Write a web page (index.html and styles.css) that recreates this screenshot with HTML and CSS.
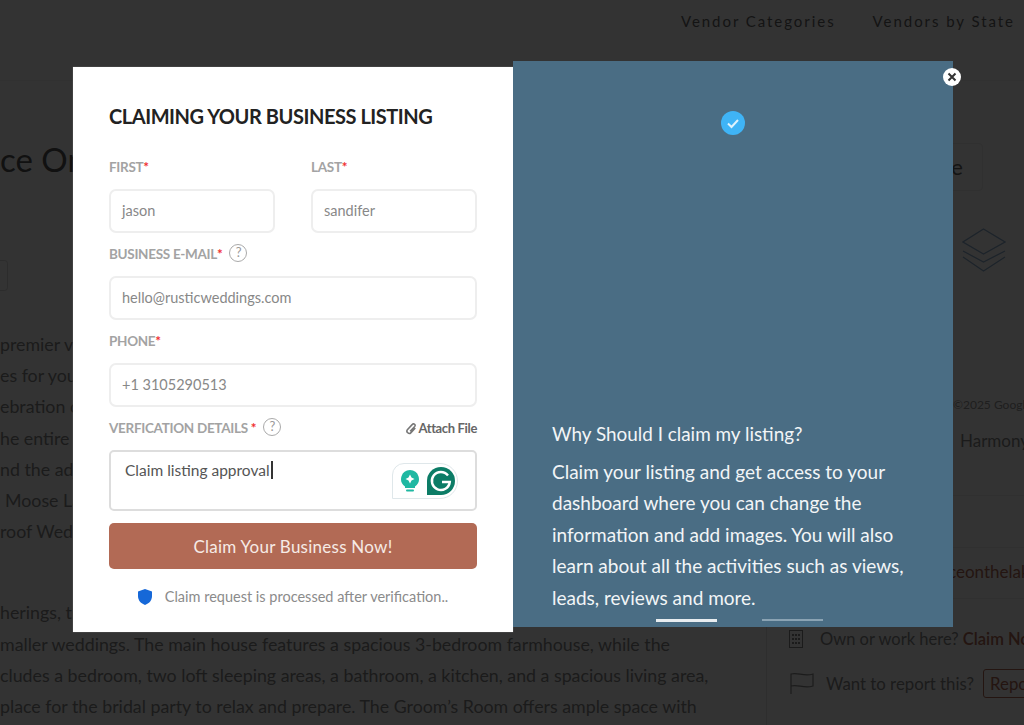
FILE: index.html
```html
<!DOCTYPE html>
<html lang="en">
<head>
    <meta charset="UTF-8">
    <meta name="viewport" content="width=device-width, initial-scale=1.0">
    <title>Claiming Your Business Listing</title>
    <link rel="stylesheet" href="styles.css">
</head>
<body>
    <!-- page behind the popup -->
    <div class="topbar">
        <a class="nav-link">Vendor Categories</a>
        <a class="nav-link">Vendors by State</a>
    </div>
    <div class="page">
        <div class="main">
            <h1 class="venue-title">ce On</h1>
            <div class="tag-box"></div>
            <div class="about">
                <p>premier venue</p>
                <p>es for your</p>
                <p>ebration of</p>
                <p>he entire</p>
                <p>nd the adjoining</p>
                <p class="indent">Moose Lake</p>
                <p>roof Wedding</p>
            </div>
            <div class="about about-two">
                <p>herings, the</p>
                <p>maller weddings. The main house features a spacious 3-bedroom farmhouse, while the</p>
                <p>cludes a bedroom, two loft sleeping areas, a bathroom, a kitchen, and a spacious living area,</p>
                <p>place for the bridal party to relax and prepare. The Groom’s Room offers ample space with</p>
            </div>
        </div>
        <div class="side">
            <div class="side-btn">Save</div>
            <svg class="layers" viewBox="0 0 44 44" fill="none" stroke="currentColor" stroke-width="1.3">
                <path d="M21.500 1 L43 14 L21.500 26 L1 14 Z"/>
                <path d="M1 23 L21.500 34 L43 23"/>
                <path d="M1 29 L21.500 43 L43 29"/>
            </svg>
            <div class="map-credit">©2025 Google</div>
            <div class="side-row side-address">Harmony</div>
            <div class="side-row side-blank"></div>
            <div class="side-row side-site">placeonthelake.com</div>
            <div class="side-row side-claim">
                <svg class="side-icon" viewBox="0 0 14 18" fill="currentColor"><rect x="0.5" y="0.5" width="13" height="17" fill="none" stroke="currentColor"/><path d="M3 4h2v2H3zM6 4h2v2H6zM9 4h2v2H9zM3 8h2v2H3zM6 8h2v2H6zM9 8h2v2H9zM3 12h2v2H3zM6 12h2v2H6zM9 12h2v2H9z"/></svg>
                <span>Own or work here? <b class="claim-now">Claim Now</b></span>
            </div>
            <div class="side-report">
                <svg class="flag" viewBox="0 0 24 22" fill="none" stroke="currentColor" stroke-width="1.2"><path d="M1 22V2C8 0 14 5 23 2V14C14 17 8 12 1 14"/></svg>
                <span>Want to report this?</span>
                <span class="report-btn">Report</span>
            </div>
        </div>
    </div>

    <div class="overlay"></div>

    <div class="modal">
        <form class="claim-form">
            <h2 class="form-title">CLAIMING YOUR BUSINESS LISTING</h2>
            <div class="name-row">
                <div class="field">
                    <label class="field-label">FIRST<span class="req">*</span></label>
                    <div class="input">jason</div>
                </div>
                <div class="field">
                    <label class="field-label">LAST<span class="req">*</span></label>
                    <div class="input">sandifer</div>
                </div>
            </div>
            <div class="field">
                <label class="field-label">BUSINESS E-MAIL<span class="req">*</span><span class="help">?</span></label>
                <div class="input">hello@rusticweddings.com</div>
            </div>
            <div class="field">
                <label class="field-label">PHONE<span class="req">*</span></label>
                <div class="input">+1 3105290513</div>
            </div>
            <div class="field">
                <div class="details-head">
                    <label class="field-label">VERFICATION DETAILS <span class="req">*</span><span class="help">?</span></label>
                    <span class="attach">
                        <svg viewBox="0 0 14 14" fill="none" stroke="#777" stroke-width="1.8"><path d="M12 6.5 7 11.8a2.6 2.6 0 0 1-4-3.6L8.6 2.2a1.8 1.8 0 0 1 2.7 2.4L6 10.2"/></svg>
                        Attach File
                    </span>
                </div>
                <div class="textarea">
                    <span>Claim listing approval</span><i class="caret"></i>
                    <div class="grammarly">
                        <svg class="bulb" viewBox="0 0 18 22"><path d="M9 0a9 9 0 0 1 5 16.4V18H4v-1.600A9 9 0 0 1 9 0z" fill="#1fb8a2"/><rect x="5" y="19.500" width="8" height="2" rx="1" fill="#1fb8a2"/><path d="M9 4.500 10.500 7.500 13.500 9 10.500 10.500 9 13.500 7.500 10.500 4.500 9 7.500 7.500z" fill="#fff"/></svg>
                        <svg class="g-logo" viewBox="0 0 28 28"><path d="M14 0a14 14 0 0 1 0 28H0V14A14 14 0 0 1 14 0z" fill="#0c7c66"/><path d="M21 8.500A9 9 0 1 0 22.800 15H15" fill="none" stroke="#fff" stroke-width="2.400"/></svg>
                    </div>
                </div>
            </div>
            <button class="claim-btn" type="button">Claim Your Business Now!</button>
            <p class="form-note">
                <svg viewBox="0 0 14 16"><path d="M7 0 14 2.500V7c0 4.500-3 7.500-7 9C3 14.500 0 11.500 0 7V2.500z" fill="#1668d8"/></svg>
                Claim request is processed after verification..
            </p>
        </form>

        <div class="why-panel">
            <div class="check-badge">
                <svg viewBox="0 0 24 24" fill="none" stroke="#dff3fd" stroke-width="2"><path d="M7 12.500 10.500 16 17 9"/></svg>
            </div>
            <div class="why-text">
                <h3>Why Should I claim my listing?</h3>
                <p>Claim your listing and get access to your dashboard where you can change the information and add images. You will also learn about all the activities such as views, leads, reviews and more.</p>
            </div>
            <div class="slider-dots">
                <span class="dot active"></span>
                <span class="dot"></span>
            </div>
        </div>

        <div class="close-btn">
            <svg viewBox="0 0 10 10" stroke="#333" stroke-width="2"><path d="M1.500 1.500 8.500 8.500M8.500 1.500 1.500 8.500"/></svg>
        </div>
    </div>
</body>
</html>
```

FILE: styles.css
```css
* {
    box-sizing: border-box;
}
html, body {
    margin: 0;
    height: 725px;
    overflow: hidden;
}
body {
    font-family: Lato, "Liberation Sans", sans-serif;
    background-color: #fff;
    color: #888;
}

/* page behind the popup */
.topbar {
    display: flex;
    justify-content: flex-end;
    align-items: center;
    gap: 37px;
    height: 42px;
    padding-right: 9px;
}
.nav-link {
    font-size: 15px;
    letter-spacing: 1.95px;
    color: #666;
}
.page {
    display: grid;
    grid-template-columns: 766px 258px;
    height: 645px;
    margin-top: 38px;
    border-top: 1px solid #f4f4f4;
}
.main {
    overflow: hidden;
    white-space: nowrap;
}
.venue-title {
    margin: 56px 0 0;
    font-size: 33px;
    line-height: 44px;
    font-weight: 400;
    color: #555;
}
.tag-box {
    width: 8px;
    height: 31px;
    margin-top: 79px;
    border: 1px solid #ddd;
    border-left: 0;
    border-radius: 0 4px 4px 0;
}
.about {
    margin-top: 38px;
    font-size: 17.8px;
    line-height: 31.2px;
}
.about p {
    margin: 0;
}
.about .indent {
    padding-left: 5px;
}
.about-two {
    margin-top: 50px;
}
.side {
    display: flex;
    flex-direction: column;
    border-left: 1px solid #e4e4e4;
    padding-top: 62px;
}
.side-btn {
    align-self: flex-end;
    width: 180px;
    height: 48px;
    margin-right: 41px;
    line-height: 46px;
    text-align: right;
    padding-right: 19px;
    font-size: 22px;
    color: #666;
    border: 1px solid #eee;
    border-radius: 4px;
    background-color: #fcfcfc;
}
.layers {
    align-self: flex-end;
    width: 44px;
    height: 44px;
    margin: 37px 18px 0 0;
    color: #8fb0d0;
}
.map-credit {
    margin: 125px 0 0 186px;
    font-size: 12px;
    line-height: 16px;
    white-space: nowrap;
    color: #999;
}
.side-row {
    border-bottom: 1px solid #eee;
    white-space: nowrap;
}
.side-address {
    height: 83px;
    padding: 18px 0 0 193px;
    font-size: 17px;
    line-height: 20px;
}
.side-blank {
    height: 52px;
}
.side-site {
    height: 51px;
    padding: 14px 0 0 159px;
    font-size: 17px;
    line-height: 20px;
    color: #b26a55;
}
.side-claim {
    display: flex;
    align-items: center;
    gap: 17px;
    height: 64px;
    padding: 16px 0 0 22px;
    font-size: 16.5px;
    border-bottom: 0;
}
.side-icon {
    width: 14px;
    height: 18px;
    flex: none;
}
.claim-now {
    color: #b26a55;
    font-weight: 600;
}
.side-report {
    display: flex;
    align-items: center;
    gap: 9px;
    height: 40px;
    padding-left: 23px;
    font-size: 16.8px;
    white-space: nowrap;
}
.flag {
    width: 24px;
    height: 22px;
    flex: none;
    margin-right: 3px;
}
.report-btn {
    padding: 3px 6px;
    color: #b26a55;
    border: 1px solid #b26a55;
    border-radius: 3px;
}
.overlay {
    position: absolute;
    inset: 0;
    background-color: rgba(0, 0, 0, 0.8);
}

/* popup */
.modal {
    position: absolute;
    left: 73px;
    top: 61px;
    display: flex;
    align-items: flex-start;
    width: 880px;
}
.claim-form {
    width: 440px;
    height: 565px;
    margin-top: 6px;
    padding: 0 36px;
    background-color: #fff;
    box-shadow: 0 0 1px #888;
}
.form-title {
    margin: 36px 0 27px;
    font-size: 20px;
    line-height: 26px;
    font-weight: 700;
    letter-spacing: -0.45px;
    color: #222;
}
.name-row {
    display: grid;
    grid-template-columns: 166px 166px;
    gap: 36px;
}
.field-label {
    display: flex;
    align-items: center;
    height: 22px;
    margin-bottom: 11px;
    font-size: 13.5px;
    font-weight: 700;
    letter-spacing: -0.3px;
    color: #a3a3a3;
    white-space: pre;
}
.req {
    color: #f03030;
}
.help {
    display: inline-block;
    width: 18px;
    height: 18px;
    margin: -2px 0 0 7px;
    border: 1.5px solid #aaa;
    border-radius: 50%;
    font-size: 13px;
    font-weight: 400;
    line-height: 15px;
    text-align: center;
    color: #999;
}
.input {
    height: 44px;
    margin: 0 0 10px;
    padding: 0 11px;
    font-size: 14.5px;
    line-height: 39px;
    color: #888;
    border: 2px solid #eee;
    border-radius: 7px;
}
.details-head {
    display: flex;
    justify-content: space-between;
    align-items: flex-start;
}
.attach {
    display: flex;
    align-items: center;
    gap: 1px;
    height: 22px;
    font-size: 13px;
    font-weight: 700;
    letter-spacing: -0.35px;
    color: #666;
}
.attach svg {
    width: 12px;
    height: 13px;
}
.textarea {
    position: relative;
    height: 61px;
    margin: 0 0 12px;
    padding: 6px 14px;
    font-size: 15.5px;
    line-height: 24px;
    color: #555;
    border: 2px solid #ddd;
    border-radius: 5px;
}
.caret {
    display: inline-block;
    width: 2px;
    height: 18px;
    margin-left: 1px;
    vertical-align: -3px;
    background-color: #333;
}
.grammarly {
    position: absolute;
    top: 11px;
    right: 17px;
    display: flex;
    align-items: center;
    gap: 8px;
    width: 66px;
    height: 36px;
    padding: 0 3px 0 8px;
    background-color: #fff;
    border: 1px solid #dfe7ea;
    border-radius: 12px 18px 18px 0;
}
.bulb {
    width: 18px;
    height: 22px;
    flex: none;
}
.g-logo {
    width: 28px;
    height: 28px;
    flex: none;
}
.claim-btn {
    display: block;
    width: 100%;
    height: 46px;
    padding: 0;
    font-family: Lato, sans-serif;
    font-size: 17px;
    letter-spacing: 0.25px;
    color: #f6ebe6;
    background-color: #b26a55;
    border: 0;
    border-radius: 5px;
}
.form-note {
    display: flex;
    justify-content: center;
    align-items: center;
    gap: 13px;
    margin: 19px 0 0;
    font-size: 14.5px;
    line-height: 18px;
    color: #8b8b8b;
}
.form-note svg {
    width: 14px;
    height: 16px;
}
.why-panel {
    display: flex;
    flex-direction: column;
    align-items: center;
    width: 440px;
    height: 566px;
    padding: 50px 0 0;
    color: #f2f5f7;
    background-color: #4a6d84;
}
.check-badge {
    width: 24px;
    height: 24px;
    border-radius: 50%;
    background-color: #3fb4f6;
}
.check-badge svg {
    display: block;
}
.why-text {
    width: 100%;
    margin-top: 284px;
    padding: 0 39px;
}
.why-text h3 {
    margin: 0 0 7px;
    font-size: 18.9px;
    line-height: 30px;
    font-weight: 400;
}
.why-text p {
    margin: 0;
    font-size: 19px;
    line-height: 31.4px;
}
.slider-dots {
    display: flex;
    gap: 45px;
    margin-top: 6px;
    padding-left: 12px;
}
.dot {
    width: 61px;
    height: 2px;
    background-color: #8aa3b3;
}
.dot.active {
    height: 3px;
    background-color: #e8edf0;
}
.close-btn {
    position: absolute;
    top: 7px;
    right: -8px;
    display: flex;
    justify-content: center;
    align-items: center;
    width: 18px;
    height: 18px;
    border-radius: 50%;
    background-color: #fff;
}
.close-btn svg {
    width: 10px;
    height: 10px;
}
```
